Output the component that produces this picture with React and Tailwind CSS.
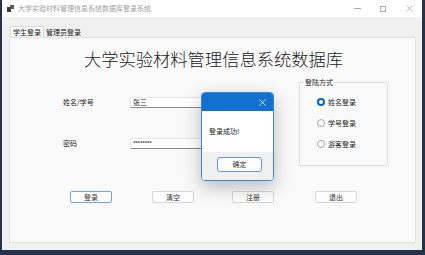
import React from "react";

const font = { fontFamily: '"Noto Sans CJK SC", "Noto Sans", sans-serif' };

function TitleBar() {
  return (
    <div className="h-[17px] bg-white flex items-center pl-[5px] text-[#a0a0a0]">
      <svg width="7" height="7" viewBox="0 0 7 7" className="mr-[4px]">
        <rect x="0" y="2" width="4" height="5" fill="#3a3a3a" />
        <rect x="3" y="0" width="4" height="4" fill="#5a5a5a" />
      </svg>
      <span className="text-[7px] leading-none">大学实验材料管理信息系统数据库登录系统</span>
      <div className="ml-auto flex items-center h-full">
        <div className="w-[26px] flex justify-center">
          <div className="w-[7px] h-px bg-[#aaa]" />
        </div>
        <div className="w-[26px] flex justify-center">
          <div className="w-[6px] h-[6px] border border-[#aaa]" />
        </div>
        <div className="w-[26px] flex justify-center">
          <svg width="7" height="7" viewBox="0 0 7 7">
            <path d="M0.5 0.5 L6.5 6.5 M6.5 0.5 L0.5 6.5" stroke="#aaa" strokeWidth="0.8" />
          </svg>
        </div>
      </div>
    </div>
  );
}

function Btn({ children, focus, className = "" }) {
  return (
    <div
      className={`w-[42px] h-[12px] flex items-center justify-center text-[7px] text-[#333] rounded-[2px] bg-[#fdfdfd] border ${
        focus ? "border-[#6aa6ea]" : "border-[#d6d6d6]"
      } ${className}`}
    >
      {children}
    </div>
  );
}

function Radio({ label, checked }) {
  return (
    <div className="flex items-center h-[10px]">
      {checked ? (
        <div className="w-[8px] h-[8px] rounded-full bg-[#0067c0] flex items-center justify-center">
          <div className="w-[4px] h-[4px] rounded-full bg-white" />
        </div>
      ) : (
        <div className="w-[8px] h-[8px] rounded-full border border-[#aaa] bg-[#f6f6f6]" />
      )}
      <span className="ml-[3px] text-[7px] text-[#222]">{label}</span>
    </div>
  );
}

function Dialog() {
  return (
    <div className="absolute left-[201px] top-[92px] w-[73px] h-[89px] flex flex-col border border-[#3b86d6] rounded-[4px] overflow-hidden bg-white shadow-[0_6px_18px_rgba(0,0,0,0.25)]">
      <div className="h-[18px] bg-[#1170d0] flex items-center justify-end pr-[7px]">
        <svg width="7" height="7" viewBox="0 0 7 7">
          <path d="M0.5 0.5 L6.5 6.5 M6.5 0.5 L0.5 6.5" stroke="#fff" strokeWidth="0.8" />
        </svg>
      </div>
      <div className="h-[41px] bg-white flex items-center pl-[7px] text-[7px] text-[#222]">登录成功!</div>
      <div className="flex-1 bg-[#f0f0f0] pt-[5px] pl-[15px]">
        <div className="w-[45px] h-[15px] rounded-[3px] border border-[#5b9be6] bg-[#fdfdfd] flex items-center justify-center text-[7px] text-[#333]">
          确定
        </div>
      </div>
    </div>
  );
}

export default function App() {
  return (
    <div className="relative w-[425px] h-[255px] bg-[#25314d] overflow-hidden" style={font}>
      <div className="ml-[2px] w-[420px] h-[250px] bg-[#f0f0f0] flex flex-col">
        <TitleBar />
        <div className="flex pl-[8px] pt-[9px] h-[20px] text-[7px] text-[#222]">
          <div className="h-[11px] px-[2px] flex items-center bg-[#f9f9f9] border border-b-0 border-[#dcdcdc]">学生登录</div>
          <div className="h-[11px] px-[2px] mt-[1px] flex items-center">管理员登录</div>
        </div>
        <div className="ml-[7px] w-[407px] h-[206px] bg-[#f9f9f9] border border-[#e2e2e2] pt-[8px]">
          <div className="h-[26px] leading-[26px] text-center text-[17.3px] font-light text-[#1a1a1a] pl-[2px]">
            大学实验材料管理信息系统数据库
          </div>
          <div className="flex mt-[10px]">
            <div className="ml-[53px] pt-[15px] text-[7px] text-[#222]">
              <div className="flex items-center h-[11px]">
                <span className="w-[67px]">姓名/学号</span>
                <div className="w-[82px] h-[11px] bg-white border border-[#e6e6e6] border-b-[#8a8a8a] flex items-center pl-[2px]">张三</div>
              </div>
              <div className="flex items-center h-[11px] mt-[30px]">
                <span className="w-[67px]">密码</span>
                <div className="w-[82px] h-[11px] bg-white border border-[#e6e6e6] border-b-[#8a8a8a] flex items-center pl-[2px] text-[6px] tracking-[-0.5px]">
                  ********
                </div>
              </div>
            </div>
            <div className="relative ml-[87px] w-[89px] h-[84px] border border-[#dcdcdc] rounded-[2px]">
              <span className="absolute -top-[5px] left-[4px] px-[1px] bg-[#f9f9f9] text-[7px] leading-[9px] text-[#222]">登陆方式</span>
              <div className="pl-[17px] pt-[14px] flex flex-col gap-[11px]">
                <Radio label="姓名登录" checked />
                <Radio label="学号登录" />
                <Radio label="游客登录" />
              </div>
            </div>
          </div>
          <div className="flex mt-[25px] pl-[60px]">
            <Btn focus>登录</Btn>
            <Btn className="ml-[40px]">清空</Btn>
            <Btn className="ml-[38px]">注册</Btn>
            <Btn className="ml-[41px]">退出</Btn>
          </div>
        </div>
      </div>
      <Dialog />
    </div>
  );
}
